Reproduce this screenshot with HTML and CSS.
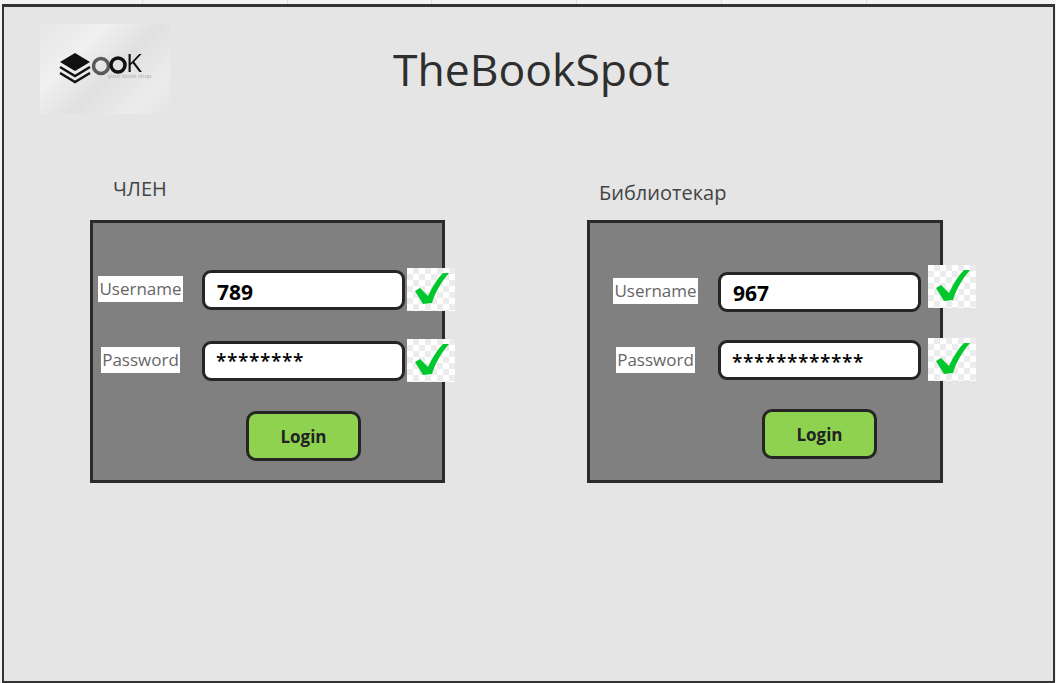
FILE: index.html
```html
<!DOCTYPE html>
<html>
    <head>
        <meta name="viewport" content="width=device-width">
        <title>TheBookSpot</title>
        <link rel="stylesheet" href="styles.css">
    </head>
    <body>
        <div class="ruler">
            <span></span><span></span><span></span><span></span><span></span><span></span>
        </div>
        <div class="frame">
            <div class="header">
                <div class="logo">
                    <svg class="logo-art" width="130" height="90" viewBox="0 0 130 90">
                        <path class="stack-top" d="M35 29L50 38L35 47L20 38Z"/>
                        <path class="stack-line" d="M20 43L35 52L50 43"/>
                        <path class="stack-line" d="M20 49L35 58L50 49"/>
                        <circle class="ring ring-grey" cx="61" cy="42" r="7.5"/>
                        <circle class="ring" cx="78" cy="41" r="7"/>
                        <text class="logo-k" x="86" y="48">K</text>
                        <text class="logo-tag" x="68" y="54">your book shop</text>
                    </svg>
                </div>
                <div class="site-title">TheBookSpot</div>
            </div>
            <div class="columns">
                <div class="col col-member">
                    <div class="col-title">ЧЛЕН</div>
                    <div class="panel">
                        <div class="row row-user">
                            <div class="label-cell"><span class="label">Username</span></div>
                            <div class="field field-bold">789</div>
                            <div class="check">
                                <svg width="48" height="43" viewBox="0 0 48 43"><path d="M8 23L13 20L21 28C25 19 30 11 36 5L42 5C34 14 28 25 25 35L16 36Z"/></svg>
                            </div>
                        </div>
                        <div class="row row-pass">
                            <div class="label-cell"><span class="label">Password</span></div>
                            <div class="field">********</div>
                            <div class="check">
                                <svg width="48" height="43" viewBox="0 0 48 43"><path d="M8 23L13 20L21 28C25 19 30 11 36 5L42 5C34 14 28 25 25 35L16 36Z"/></svg>
                            </div>
                        </div>
                        <div class="btn-gp"><button>Login</button></div>
                    </div>
                </div>
                <div class="col col-librarian">
                    <div class="col-title">Библиотекар</div>
                    <div class="panel">
                        <div class="row row-user">
                            <div class="label-cell"><span class="label">Username</span></div>
                            <div class="field field-bold">967</div>
                            <div class="check">
                                <svg width="48" height="43" viewBox="0 0 48 43"><path d="M8 23L13 20L21 28C25 19 30 11 36 5L42 5C34 14 28 25 25 35L16 36Z"/></svg>
                            </div>
                        </div>
                        <div class="row row-pass">
                            <div class="label-cell"><span class="label">Password</span></div>
                            <div class="field">************</div>
                            <div class="check">
                                <svg width="48" height="43" viewBox="0 0 48 43"><path d="M8 23L13 20L21 28C25 19 30 11 36 5L42 5C34 14 28 25 25 35L16 36Z"/></svg>
                            </div>
                        </div>
                        <div class="btn-gp"><button>Login</button></div>
                    </div>
                </div>
            </div>
        </div>
    </body>
</html>
```

FILE: styles.css
```css
html,body{
    margin:0;
    height:100%;
    overflow:hidden;
}
body{
    background:#f3f3f3;
    font-family:"Open Sans",sans-serif;
    color:#3c3c3c;
}
.ruler{display:flex;height:4px;margin-left:-2px}
.ruler span{width:143.8px;flex-shrink:0;border-right:1px solid #dcdcdc}

.frame{
    box-sizing:border-box;
    height:679px;
    margin-left:2px;
    margin-right:1px;
    border:2px solid #333;
    border-top-width:3px;
    background:#e5e5e5;
}

/* header */
.header{display:flex;height:189px}
.logo{
    width:130px;
    height:90px;
    margin-left:36px;
    margin-top:17px;
    background:linear-gradient(135deg,#e6e6e6 0%,#f0f0f0 30%,#e0e0e0 55%,#ececec 80%,#e4e4e4 100%);
}
.logo-art{display:block;filter:blur(.5px)}
.stack-top{fill:#111}
.stack-line{fill:none;stroke:#111;stroke-width:2.5}
.ring{fill:none;stroke:#111;stroke-width:3.5}
.ring-grey{stroke:#5a5a5a}
.logo-k{font-family:"Open Sans",sans-serif;font-size:26px;font-weight:500;fill:#111}
.logo-tag{font-family:"Open Sans",sans-serif;font-size:6px;fill:#aaa}
.site-title{
    font-size:44.5px;
    line-height:62px;
    margin-left:223px;
    margin-top:31px;
    color:#2e2e2e;
}

/* columns */
.columns{display:flex}
.col{width:355px}
.col-member{margin-left:86px}
.col-librarian{margin-left:142px}
.col-title{font-size:20px;line-height:24px;height:24px;color:#444}
.col-member .col-title{margin-left:23px;margin-top:-19px;margin-bottom:19px}
.col-librarian .col-title{margin-left:12px;margin-top:-15px;margin-bottom:15px}
.col-librarian .panel{width:356px}

.panel{
    box-sizing:border-box;
    height:263px;
    background:#808080;
    border:3px solid #2b2b2b;
}
.row{display:flex;align-items:center;width:400px}
.label-cell{
    box-sizing:border-box;
    width:109px;
    padding-right:14px;
    display:flex;
    justify-content:center;
    flex-shrink:0;
}
.label{
    background:#fff;
    color:#666;
    font-size:17px;
    line-height:26px;
    padding:0 1px;
    white-space:nowrap;
}
.field{
    box-sizing:border-box;
    width:203px;
    height:40px;
    background:#fff;
    border:3px solid #252525;
    border-radius:9px;
    color:#000;
    font-size:19px;
    font-weight:600;
    line-height:34px;
    padding-left:11px;
    letter-spacing:.6px;
}
.field-bold{font-size:21px;font-weight:700;letter-spacing:0;padding-left:12px;line-height:38px}
.check{
    width:48px;
    height:43px;
    flex-shrink:0;
    background-color:#fff;
    background-image:linear-gradient(45deg,#ececec 25%,transparent 25%,transparent 75%,#ececec 75%),linear-gradient(45deg,#ececec 25%,transparent 25%,transparent 75%,#ececec 75%);
    background-size:12px 12px;
    background-position:0 0,6px 6px;
}
.check svg{display:block}
.check path{fill:#00c72c}

.col-member .row-user{margin-top:45px}
.col-member .row-pass{margin-top:28px}
.col-member .label-cell{margin-bottom:2px}
.col-member .check{margin-left:2px}
.col-member .btn-gp{margin-top:29px;margin-left:153px}
.col-librarian .label-cell{width:128px;padding-left:3px;padding-right:0}
.col-librarian .row-user{margin-top:42px}
.col-librarian .row-user .label-cell{position:relative;top:4px}
.col-librarian .row-user .field{position:relative;top:5px;line-height:36px}
.col-librarian .row-pass{margin-top:30px}
.col-librarian .row-pass .field{line-height:38px}
.col-librarian .check{margin-left:7px}
.col-librarian .btn-gp{margin-top:28px;margin-left:172px}

.btn-gp{display:flex}
button{
    box-sizing:border-box;
    width:115px;
    height:50px;
    background:#8fd24f;
    border:3px solid #252525;
    border-radius:10px;
    color:#222;
    font-family:"Open Sans",sans-serif;
    font-size:17px;
    font-weight:700;
}
```
